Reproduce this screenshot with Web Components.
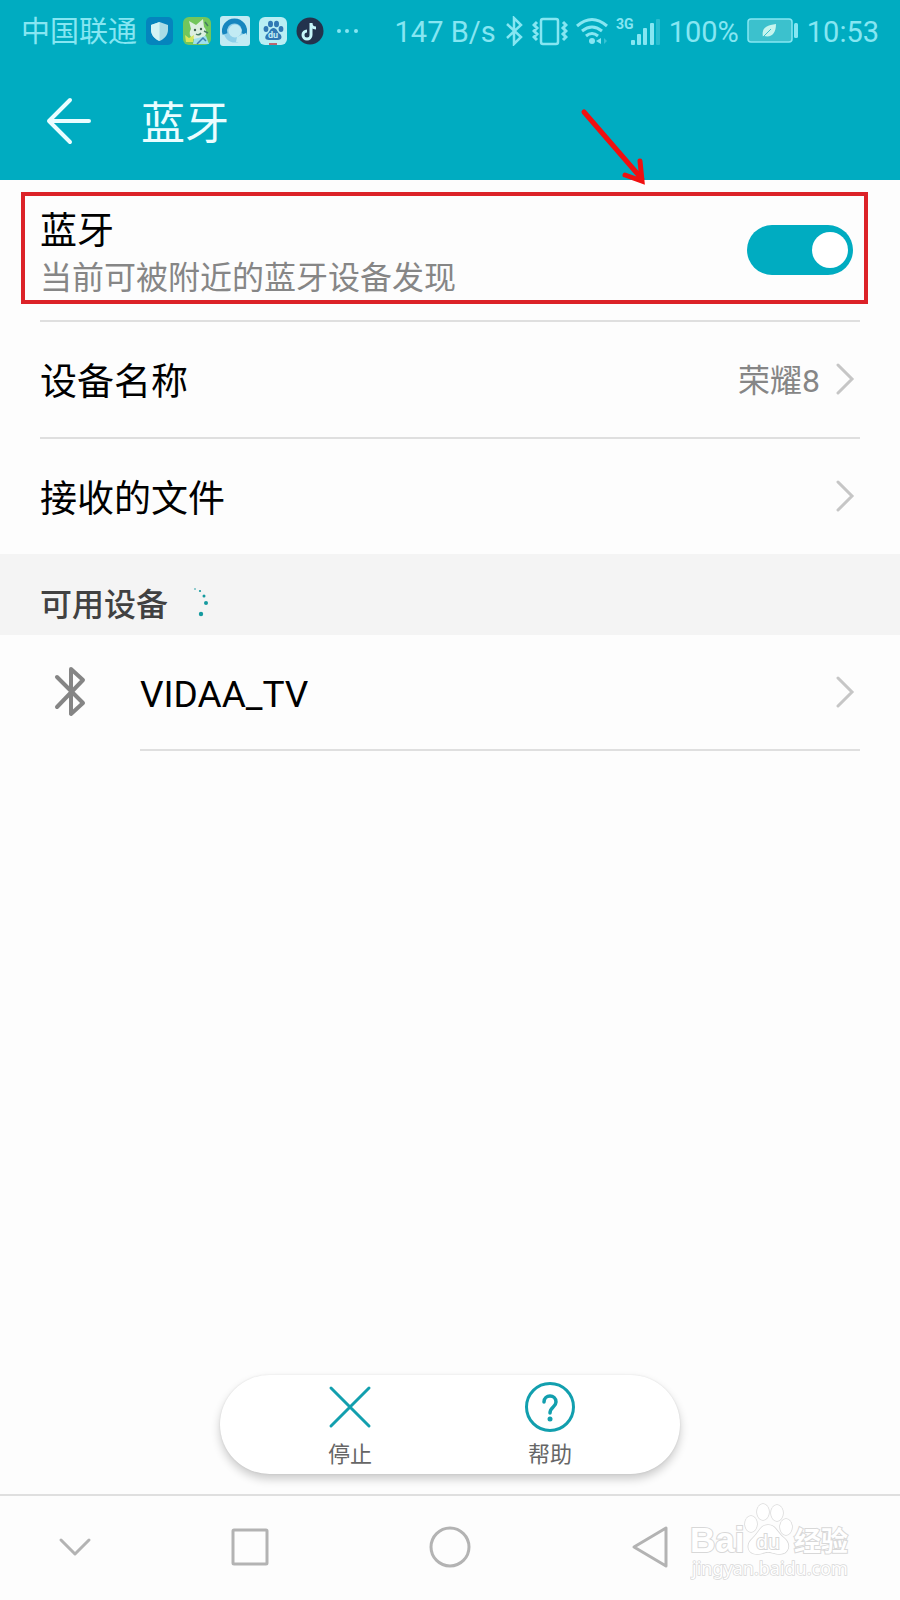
<!DOCTYPE html>
<html lang="zh-CN">
<head>
<meta charset="utf-8">
<meta name="viewport" content="width=device-width, initial-scale=1">
<title>蓝牙</title>
<style>
  :root { --accent: #00acc1; --rule: #dfdfdf; --muted: #868686; --mark: #dc2228; }
  html, body { margin: 0; }
  body { background: #fdfdfd; color: #000; font-family: Roboto, "Noto Sans CJK SC", sans-serif; }
</style>
</head>
<body>
<bluetooth-page></bluetooth-page>
<script>
const define = (name, css, html) => customElements.define(name, class extends HTMLElement {
  constructor() {
    super();
    const t = document.createElement('template');
    t.innerHTML = `<style>*{box-sizing:border-box}svg{display:block;flex:none}button{font:inherit;color:inherit;background:none;border:0;padding:0;margin:0}${css}</style>${html}`;
    this.attachShadow({ mode: 'open' }).append(t.content.cloneNode(true));
  }
});

define('status-bar', `
  :host { display: flex; justify-content: space-between; align-items: center; height: 62px; padding: 0 21px; color: #86e6f2; font-size: 29px; line-height: 40px; white-space: nowrap; }
  div { display: flex; align-items: center; gap: 8px; }
  .apps { gap: 9px; }
  span { padding-top: 2px; }
`, `
  <div class="apps">
    <span>中国联通</span>
    <svg width="27" height="28" viewBox="0 0 27 28"><rect width="27" height="28" rx="5" fill="#0584bd"/><path d="M13.500 5 L22 8 V13 C22 18 18 22 13.500 24 C9 22 5 18 5 13 V8 Z" fill="#a9dce6"/><path d="M13.500 5 V24 C9 22 5 18 5 13 V8 Z" fill="#d3f3f5"/></svg>
    <svg width="29" height="28" viewBox="0 0 29 28"><rect x="1" width="28" height="28" rx="6" fill="#73c65c"/><path d="M9 12 L7 4 L14 8 L21 2 L22 10 C26 14 24 20 20 22 H12 C7 20 7 15 9 12Z" fill="#dcefe0"/><path d="M3 18 L7 21 L12 18 L11 25 H4Z" fill="#d8e65b"/><path d="M12 22 L24 19 L27 27 H11Z" fill="#9fe0ee"/><path d="M15 27 L21 21 L24 24" fill="none" stroke="#3e7db5" stroke-width="1.500"/><circle cx="13" cy="13" r="1.200" fill="#406050"/><circle cx="19" cy="12" r="1.200" fill="#406050"/><path d="M14 17 Q17 19 19 16 M23 5 L26 9 M22 14 L26 16" stroke="#477d62" stroke-width="1.500" fill="none"/></svg>
    <svg width="30" height="30" viewBox="0 0 30 30"><rect width="30" height="30" rx="3" fill="#c2ebf4"/><circle cx="15" cy="15" r="9" fill="none" stroke="#8fd0ea" stroke-width="5"/><path d="M5 18 A10 10 0 1 1 24 18" fill="none" stroke="#1686bf" stroke-width="5"/><path d="M17 21 L26 17 L27 27 L16 26Z" fill="#c2ebf4"/></svg>
    <svg width="28" height="28" viewBox="0 0 28 28"><rect width="28" height="28" rx="6" fill="#b9eef4"/><g fill="#3078b4"><ellipse cx="7" cy="12" rx="2.400" ry="3"/><ellipse cx="11.500" cy="7" rx="2.500" ry="3.300"/><ellipse cx="17.500" cy="7" rx="2.500" ry="3.300"/><ellipse cx="22" cy="12" rx="2.400" ry="3"/><path d="M14.500 11 C18 11 18 15 21 17 C24 20 22 23 19 23 H10 C6 23 5 20 8 17 C11 15 11 11 14.500 11Z"/></g><text x="14" y="21" text-anchor="middle" font-family="Roboto" font-size="9" font-weight="700" fill="#c5eef4">du</text><path d="M10 27 H18" stroke="#bb6670" stroke-width="2"/></svg>
    <svg width="28" height="28" viewBox="0 0 28 28"><circle cx="14" cy="14" r="13.500" fill="#23334d"/><path d="M15 6 V18 A4 4 0 1 1 11 14 M15 6 C15 9 17 11 20 11" fill="none" stroke="#c7f6fa" stroke-width="3"/></svg>
    <svg width="28" height="28" viewBox="0 0 28 28" fill="currentColor"><circle cx="6" cy="14" r="2"/><circle cx="14" cy="14" r="2"/><circle cx="23" cy="14" r="2"/></svg>
  </div>
  <div>
    <span>147 B/s</span>
    <svg width="20" height="30" viewBox="0 0 20 30" fill="none" stroke="currentColor" stroke-width="2.500"><path d="M3 8 L17 21 L10 28 V2 L17 9 L3 22"/></svg>
    <svg width="36" height="30" viewBox="0 0 36 30" fill="none" stroke="currentColor"><rect x="9" y="3" width="17" height="25" rx="2" stroke-width="2.500"/><path d="M5 6 L2 9 L5 12 L2 15 L5 18 L2 21 L5 24 M31 6 L34 9 L31 12 L34 15 L31 18 L34 21 L31 24" stroke-width="3"/></svg>
    <svg width="32" height="30" viewBox="0 0 32 30" fill="none" stroke="currentColor" stroke-width="3"><path d="M1 10 Q16 -3 31 10 M6 15 Q16 7 26 15 M10 20 Q16 15 22 20"/><circle cx="16" cy="25" r="3" fill="currentColor" stroke="none"/><path d="M25 22 V28 L20 25Z" fill="currentColor" stroke="none"/><path d="M28 22 V28 L31 25Z" fill="currentColor" stroke="none" opacity=".4"/></svg>
    <svg width="45" height="30" viewBox="0 0 45 30" fill="currentColor"><text x="0" y="13" font-family="Roboto" font-size="14" font-weight="700">3G</text><rect x="15" y="24" width="4" height="5" rx="1"/><rect x="21" y="18" width="4" height="11" rx="1"/><rect x="27" y="12" width="4" height="17" rx="1"/><rect x="34" y="7" width="4" height="22" rx="1"/><rect x="40" y="3" width="4" height="26" rx="1" opacity=".3"/></svg>
    <span>100%</span>
    <svg width="52" height="26" viewBox="0 0 52 26"><rect x="1" y="1" width="44" height="23" rx="3" fill="#3cc1cd" stroke="#86e6f2" stroke-width="1.500"/><path d="M16 19 C14 10 20 7 29 6 C29 15 25 20 17 18Z" fill="#c5f5ee"/><path d="M15 20 L24 11" stroke="#3cc1cd" stroke-width="1"/><rect x="47" y="5" width="4" height="15" rx="1.500" fill="#86e6f2"/></svg>
    <span>10:53</span>
  </div>
`);

define('app-header', `
  :host { display: block; background: var(--accent); color: #eafdff; }
  .bar { display: flex; align-items: center; gap: 44px; height: 118px; padding: 0 45px; }
  h1 { margin: 0; padding-top: 6px; font-size: 44px; line-height: 64px; font-weight: 400; }
`, `
  <status-bar></status-bar>
  <div class="bar">
    <button aria-label="返回"><svg width="52" height="52" viewBox="0 0 52 52" fill="none" stroke="currentColor" stroke-width="4" stroke-linecap="round" stroke-linejoin="round"><path d="M25 5 L4 26 L25 47 M4 26 H44"/></svg></button>
    <h1><slot></slot></h1>
  </div>
`);

define('toggle-row', `
  :host { display: block; padding: 12px 32px 16px 21px; }
  .mark { position: relative; display: flex; align-items: center; justify-content: space-between; border: 4px solid var(--mark); padding: 0 11px 0 15px; }
  label { display: grid; padding-top: 12px; font-size: 37px; line-height: 48px; }
  small { font-size: 32px; line-height: 44px; color: var(--muted); }
  input { appearance: none; margin: 4px 0 0; width: 106px; height: 50px; border-radius: 25px; background: var(--accent); padding: 0 5px; display: flex; align-items: center; justify-content: flex-end; flex: none; }
  input::before { content: ""; width: 36px; height: 36px; border-radius: 50%; background: #fff; }
  input:not(:checked) { justify-content: flex-start; background: #bbb; }
  svg { position: absolute; top: -92px; right: 214px; pointer-events: none; }
`, `
  <div class="mark">
    <label for="sw"><span><slot></slot></span><small><slot name="note"></slot></small></label>
    <input id="sw" type="checkbox" role="switch" checked>
    <svg width="70" height="84" viewBox="0 0 70 84" fill="none" stroke="#f01010" stroke-width="5" stroke-linecap="round"><path d="M4 8 L62 75 M45 71 L62 77 L60 57" /></svg>
  </div>
`);

define('list-row', `
  :host { display: block; padding: 0 40px; }
  button { display: flex; align-items: center; width: 100%; min-height: 117px; border-top: 2px solid var(--rule); text-align: left; font-size: 37px; line-height: 48px; }
  .name { flex: 1; padding-top: 6px; }
  .value { padding-top: 2px; font-size: 32px; color: var(--muted); margin-right: 16px; }
`, `
  <button><span class="name"><slot></slot></span><span class="value"><slot name="value"></slot></span>
  <svg width="24" height="36" viewBox="0 0 24 36" fill="none" stroke="#c6c6c6" stroke-width="3" stroke-linecap="round"><path d="M2 3 L16 17 L2 31"/></svg></button>
`);

define('device-row', `
  :host { display: block; padding: 0 40px; }
  button { display: grid; grid-template-columns: 100px 1fr; align-items: center; width: 100%; text-align: left; font-size: 37px; line-height: 48px; }
  .line { display: flex; align-items: center; justify-content: space-between; height: 116px; border-bottom: 2px solid var(--rule); }
  .name { padding-top: 6px; }
`, `
  <button>
    <svg width="60" height="56" viewBox="0 0 60 56" fill="none" stroke="#858585" stroke-width="4" stroke-linecap="round" stroke-linejoin="round"><path d="M17 12 L43 38 L31 49 V4 L43 15 L17 42"/></svg>
    <span class="line"><span class="name"><slot></slot></span><svg width="24" height="36" viewBox="0 0 24 36" fill="none" stroke="#c6c6c6" stroke-width="3" stroke-linecap="round"><path d="M2 4 L16 18 L2 32"/></svg></span>
  </button>
`);

define('section-title', `
  :host { display: flex; align-items: center; gap: 26px; height: 81px; padding: 16px 40px 0; box-sizing: border-box; background: #f4f4f4; color: #414141; }
  h2 { margin: 0; padding-top: 4px; font-size: 32px; line-height: 48px; font-weight: 500; }
`, `
  <h2><slot></slot></h2>
  <svg width="32" height="32" viewBox="0 0 32 32" fill="#159a9f"><circle cx="1" cy="2" r=".8"/><circle cx="6" cy="4" r="1.100"/><circle cx="10" cy="9" r="1.500"/><circle cx="12" cy="16" r="2"/><circle cx="7" cy="27" r="2.200"/></svg>
`);

define('action-pill', `
  :host { display: flex; justify-content: center; gap: 100px; align-self: center; width: 460px; max-width: 100%; height: 99px; margin: auto 0 20px; border-radius: 50px; background: #fff; box-shadow: 0 5px 10px rgba(0,0,0,.2), 0 0 2px rgba(0,0,0,.1); color: #666; }
  button { width: 100px; display: grid; justify-items: center; align-content: start; padding-top: 5px; gap: 4px; font-size: 22px; line-height: 34px; }
  svg { stroke: #129fae; fill: none; stroke-width: 3; stroke-linecap: round; }
`, `
  <button><svg width="54" height="54" viewBox="0 0 54 54"><path d="M8 8 L46 46 M46 8 L8 46"/></svg>停止</button>
  <button><svg width="54" height="54" viewBox="0 0 54 54"><circle cx="27" cy="27" r="23.500"/><path d="M21 22 C21 14 33 14 33 22 C33 27 27 27 27 33" stroke-width="3.500"/><circle cx="27" cy="39" r="2.500" fill="#129fae" stroke="none"/></svg>帮助</button>
`);

define('nav-bar', `
  :host { position: relative; display: grid; grid-template-columns: 3fr 4fr 4fr 4fr 3fr; height: 106px; box-sizing: border-box; border-top: 2px solid var(--rule); }
  button { display: grid; place-items: center; }
  button svg { fill: none; stroke: #b3b3b3; stroke-width: 3; stroke-linecap: round; stroke-linejoin: round; }
  .brand { position: absolute; right: 42px; top: 4px; }
`, `
  <button aria-label="收起"><svg width="48" height="48" viewBox="0 0 48 48"><path d="M10 16 L24 30 L38 16"/></svg></button>
  <button aria-label="最近"><svg width="48" height="48" viewBox="0 0 48 48"><rect x="7" y="6" width="34" height="34" rx="1"/></svg></button>
  <button aria-label="主页"><svg width="48" height="48" viewBox="0 0 48 48"><circle cx="24" cy="23" r="19"/></svg></button>
  <button aria-label="后退"><svg width="48" height="48" viewBox="0 0 48 48"><path d="M40 4 V42 L8 23Z"/></svg></button>
  <svg class="brand" width="168" height="86" viewBox="0 0 168 86" fill="#fff" stroke="#d8d8d8" stroke-width="2" paint-order="stroke" font-family="'Liberation Sans', 'Noto Sans CJK SC', sans-serif" font-weight="700">
    <text x="0" y="52" font-size="35">Bai</text>
    <g stroke-width="1.500"><ellipse cx="61" cy="24" rx="6" ry="8"/><ellipse cx="73" cy="12" rx="6" ry="8"/><ellipse cx="87" cy="13" rx="6" ry="8"/><ellipse cx="96" cy="27" rx="6" ry="8"/><path d="M78 25 C86 25 87 33 94 38 C102 45 98 54 90 54 C84 54 82 52 78 52 C74 52 72 54 67 54 C58 54 55 45 63 38 C69 33 70 25 78 25Z"/></g>
    <text x="78" y="49" font-size="21" text-anchor="middle" font-weight="400">du</text>
    <text x="104" y="51" font-size="27">经验</text>
    <text x="2" y="75" font-size="18" font-weight="400" font-family="'Noto Sans', sans-serif" stroke-width="1.500">jingyan.baidu.com</text>
  </svg>
`);

define('bluetooth-page', `
  :host { display: flex; flex-direction: column; min-height: 100vh; }
  main { flex: 1; display: flex; flex-direction: column; }
`, `
  <app-header>蓝牙</app-header>
  <main>
    <toggle-row>蓝牙<span slot="note">当前可被附近的蓝牙设备发现</span></toggle-row>
    <list-row>设备名称<span slot="value">荣耀8</span></list-row>
    <list-row>接收的文件</list-row>
    <section-title>可用设备</section-title>
    <device-row>VIDAA_TV</device-row>
    <action-pill></action-pill>
  </main>
  <nav-bar></nav-bar>
`);
</script>
</body>
</html>
